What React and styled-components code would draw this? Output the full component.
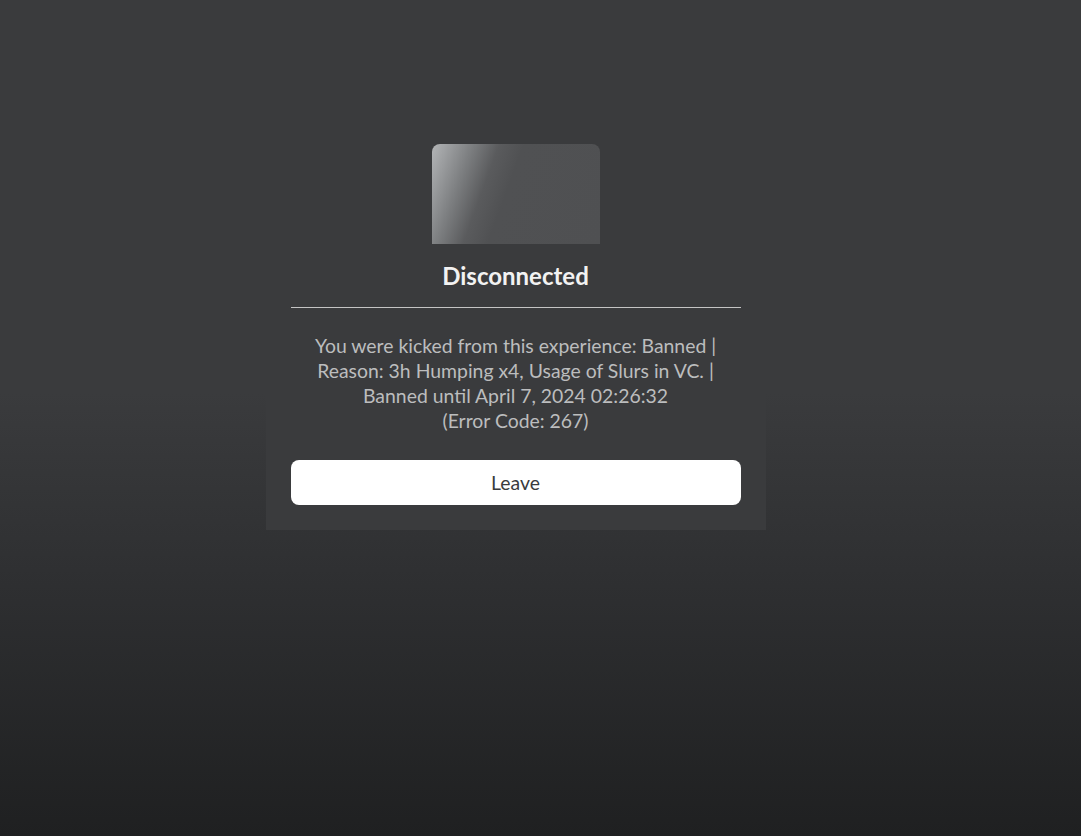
import React from 'react';
import styled, { createGlobalStyle } from 'styled-components';

const GlobalStyle = createGlobalStyle`
    html, body {
        margin: 0;
        padding: 0;
    }
    body {
        font-family: Lato, "Noto Sans", sans-serif;
        background: #2a2b2d;
    }
`

const Screen = styled.div`
    width: 100%;
    height: 836px;
    background: linear-gradient(180deg, #3a3b3d 0%, #3a3b3d 47%, #2e2f31 70%, #1f2021 100%);
    display: flex;
    justify-content: center;
    align-items: flex-start;
    padding: 119px 50px 0 0;
    box-sizing: border-box;
    overflow: hidden;
`

const Prompt = styled.div`
    width: 500px;
    box-sizing: border-box;
    padding: 25px;
    background: #3a3b3d;
    display: flex;
    flex-direction: column;
    align-items: center;
`

const Thumb = styled.div`
    width: 168px;
    height: 100px;
    border-radius: 8px 8px 0 0;
    background: linear-gradient(110deg, #b3b5b7 0%, #7c7e80 20%, #5a5b5d 33%, #505153 45%, #4f5052 100%);
`

const Title = styled.h1`
    margin: 18px 0 0;
    font-size: 24px;
    line-height: 28px;
    font-weight: 700;
    color: #f2f2f2;
`

const Divider = styled.hr`
    width: 100%;
    margin: 17px 0 0;
    border: none;
    height: 1px;
    background: #c4c4c4;
`

const Message = styled.p`
    margin: 25px 0 0;
    font-size: 19.4px;
    line-height: 25px;
    color: #bcbdbe;
    text-align: center;
`

const LeaveButton = styled.button`
    margin-top: 27px;
    width: 100%;
    height: 45px;
    border: none;
    border-radius: 8px;
    background: #ffffff;
    color: #393b3d;
    font-family: inherit;
    font-size: 19.4px;
    cursor: pointer;
`

const App = () => {
    return (
        <>
            <GlobalStyle />
            <Screen>
                <Prompt>
                    <Thumb />
                    <Title>Disconnected</Title>
                    <Divider />
                    <Message>
                        You were kicked from this experience: Banned |<br />
                        Reason: 3h Humping x4, Usage of Slurs in VC. |<br />
                        Banned until April 7, 2024 02:26:32<br />
                        (Error Code: 267)
                    </Message>
                    <LeaveButton>Leave</LeaveButton>
                </Prompt>
            </Screen>
        </>
    )
}

export default App;
